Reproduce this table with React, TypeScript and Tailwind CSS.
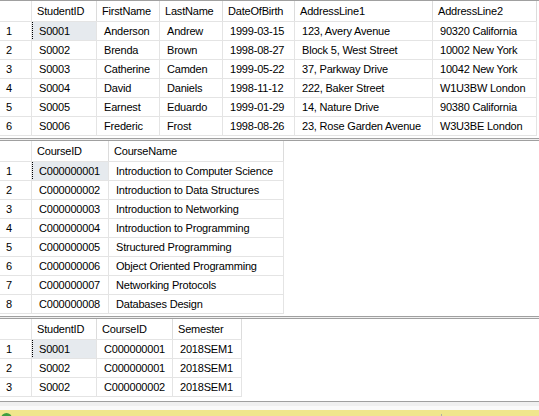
import React from "react";

type Col = { name: string; w: string };

function Grid({ cols, rows }: { cols: Col[]; rows: string[][] }) {
  return (
    <div className="border-t border-[#a0a0a0] bg-white pb-[2px]">
      <div className="flex h-[21px] w-fit border-b border-[#e4e4e4]">
        <div className="w-[32px] h-full border-r border-[#e4e4e4]" />
        {cols.map((c) => (
          <div
            key={c.name}
            className={`${c.w} h-full border-r border-[#dcdcdc] flex items-center pl-[5px] pt-[1px] whitespace-nowrap overflow-hidden`}
          >
            {c.name}
          </div>
        ))}
      </div>
      {rows.map((r, i) => (
        <div key={i} className="flex h-[19px] w-fit border-b border-[#e4e4e4]">
          <div className="w-[32px] h-full border-r border-[#e4e4e4] flex items-center pl-[6px]">
            {i + 1}
          </div>
          {r.map((v, j) => {
            const sel = i === 0 && j === 0;
            return (
              <div
                key={j}
                className={`${cols[j].w} h-full border-r border-[#e4e4e4] flex items-center pl-[7px] whitespace-nowrap overflow-hidden relative ${
                  sel ? "bg-[#e6eaee]" : ""
                }`}
              >
                {v}
                {sel && (
                  <div className="absolute left-0 -top-px -right-px -bottom-px border border-dotted border-black" />
                )}
              </div>
            );
          })}
        </div>
      ))}
    </div>
  );
}

function Splitter() {
  return <div className="h-[2px] border-t border-[#a0a0a0] bg-[#f0f0f0]" />;
}

export default function App() {
  const g1Cols: Col[] = [
    { name: "StudentID", w: "w-[65px]" },
    { name: "FirstName", w: "w-[63px]" },
    { name: "LastName", w: "w-[63px]" },
    { name: "DateOfBirth", w: "w-[72px]" },
    { name: "AddressLine1", w: "w-[138px]" },
    { name: "AddressLine2", w: "w-[104px]" },
  ];
  const g1Rows = [
    ["S0001", "Anderson", "Andrew", "1999-03-15", "123, Avery Avenue", "90320 California"],
    ["S0002", "Brenda", "Brown", "1998-08-27", "Block 5, West Street", "10002 New York"],
    ["S0003", "Catherine", "Camden", "1999-05-22", "37, Parkway Drive", "10042 New York"],
    ["S0004", "David", "Daniels", "1998-11-12", "222, Baker Street", "W1U3BW London"],
    ["S0005", "Earnest", "Eduardo", "1999-01-29", "14, Nature Drive", "90380 California"],
    ["S0006", "Frederic", "Frost", "1998-08-26", "23, Rose Garden Avenue", "W3U3BE London"],
  ];
  const g2Cols: Col[] = [
    { name: "CourseID", w: "w-[77px]" },
    { name: "CourseName", w: "w-[175px]" },
  ];
  const g2Rows = [
    ["C000000001", "Introduction to Computer Science"],
    ["C000000002", "Introduction to Data Structures"],
    ["C000000003", "Introduction to Networking"],
    ["C000000004", "Introduction to Programming"],
    ["C000000005", "Structured Programming"],
    ["C000000006", "Object Oriented Programming"],
    ["C000000007", "Networking Protocols"],
    ["C000000008", "Databases Design"],
  ];
  const g3Cols: Col[] = [
    { name: "StudentID", w: "w-[65px]" },
    { name: "CourseID", w: "w-[76px]" },
    { name: "Semester", w: "w-[69px]" },
  ];
  const g3Rows = [
    ["S0001", "C000000001", "2018SEM1"],
    ["S0002", "C000000001", "2018SEM1"],
    ["S0002", "C000000002", "2018SEM1"],
  ];

  return (
    <div className="w-[539px] h-[416px] overflow-hidden bg-white text-black text-[11px] tracking-[-0.2px] font-['Liberation_Sans',Arial,sans-serif] flex flex-col">
      <Grid cols={g1Cols} rows={g1Rows} />
      <Splitter />
      <Grid cols={g2Cols} rows={g2Rows} />
      <Splitter />
      <div className="pb-[2px] bg-white">
        <Grid cols={g3Cols} rows={g3Rows} />
      </div>
      <div className="h-[5px] border-t border-[#a0a0a0] bg-[#f0f0f0]" />
      <div className="h-[4px] bg-[#fafafa]" />
      <div className="h-[6px] overflow-hidden bg-[#f0e68c] flex items-start pl-[1px] pt-[3px]">
        <div className="w-[11px] h-[11px] rounded-full bg-[#3f9d3f] shrink-0" />
        <div className="ml-[429px] mt-[1px] w-px h-[3px] bg-[#b0b0a0]" />
      </div>
    </div>
  );
}
